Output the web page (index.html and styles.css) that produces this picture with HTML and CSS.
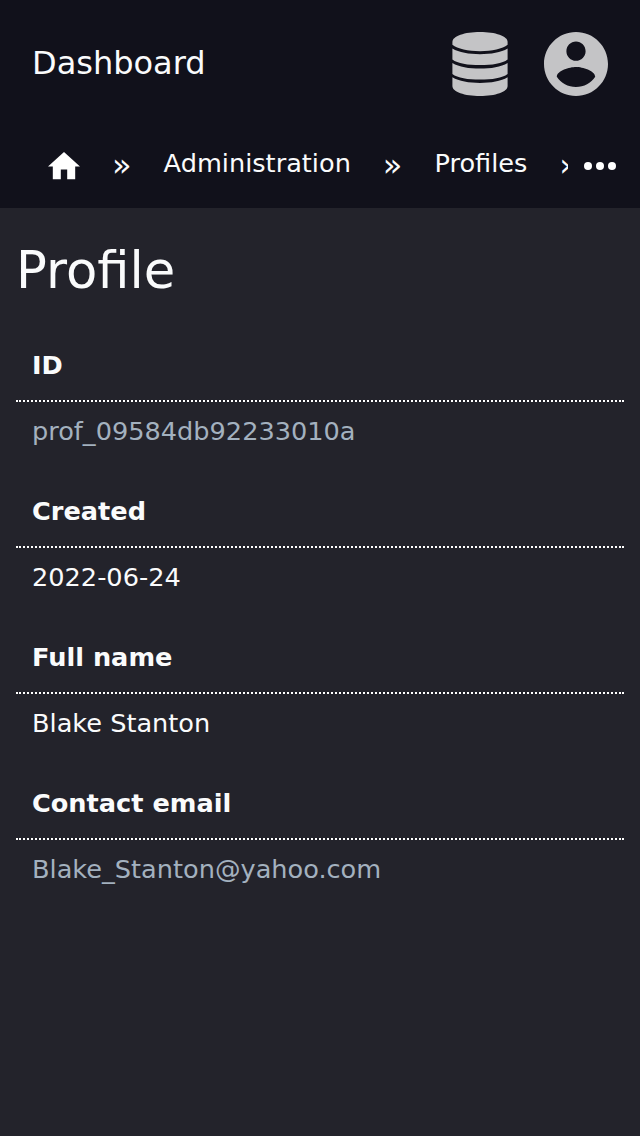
FILE: index.html
```html
<!DOCTYPE html>
<html lang="en">
<head>
<meta charset="utf-8">
<title>Profile</title>
<link rel="stylesheet" href="styles.css">
</head>
<body>
<header class="header">
  <div class="topbar">
    <span class="brand">Dashboard</span>
    <div class="actions">
      <svg class="icon-db" viewBox="0 0 56 64"><path d="M.4 10C.4 4 12.6 0 28 0s27.600 4 27.600 10v2.800C50.500 17 40 19.200 28 19.200S5.500 17 .4 12.800z"/><path d="M.4 16.600C7 20.600 17 22.300 28 22.300s21-1.700 27.600-5.700v10.900C50.500 31.500 40 33.100 28 33.100S5.500 31.500.4 27.500z"/><path d="M.4 31C7 35 17 36.600 28 36.600s21-1.600 27.600-5.600v11C50.500 46 40 47.600 28 47.600S5.500 46 .4 42z"/><path d="M.4 45.300C7 49.300 17 51 28 51s21-1.700 27.600-5.700V54C55.600 60 43.400 64 28 64S.4 60 .4 54z"/></svg>
      <svg class="icon-user" viewBox="2 2 20 20"><path d="M12 2C6.480 2 2 6.480 2 12s4.480 10 10 10 10-4.480 10-10S17.520 2 12 2zm0 3c1.660 0 3 1.340 3 3s-1.340 3-3 3-3-1.340-3-3 1.340-3 3-3zm0 14.200c-2.500 0-4.710-1.280-6-3.220.03-1.990 4-3.080 6-3.080 1.990 0 5.970 1.090 6 3.080-1.290 1.940-3.500 3.220-6 3.220z"/></svg>
    </div>
  </div>
  <nav class="crumbs">
    <div class="trail">
      <svg class="home" viewBox="2 3 20 17"><path d="M10 20v-6h4v6h5v-8h3L12 3 2 12h3v8z"/></svg>
      <span class="sep">»</span><span class="crumb">Administration</span><span class="sep">»</span><span class="crumb">Profiles</span><span class="sep">»</span>
    </div>
    <svg class="more" viewBox="0 0 32 8"><circle cx="4" cy="4" r="4"/><circle cx="16" cy="4" r="4"/><circle cx="28" cy="4" r="4"/></svg>
  </nav>
</header>
<main class="content">
  <h1 class="title">Profile</h1>
  <dl class="details">
    <dt class="label">ID</dt><dd class="value link">prof_09584db92233010a</dd>
    <dt class="label">Created</dt><dd class="value">2022-06-24</dd>
    <dt class="label">Full name</dt><dd class="value">Blake Stanton</dd>
    <dt class="label">Contact email</dt><dd class="value link">Blake_Stanton@yahoo.com</dd>
  </dl>
</main>
</body>
</html>
```
FILE: styles.css
```css
* { box-sizing: border-box; }
body { margin: 0; background: #23232b; color: #fafbfc; font: 25.6px/40px "DejaVu Sans", sans-serif; }
.header { height: 208px; background: #11111b; }
.topbar { height: 128px; padding: 0 32px; display: flex; align-items: center; justify-content: space-between; }
.brand { font-size: 32px; margin-bottom: 2px; }
.actions { display: flex; gap: 36px; fill: #c4c4c6; }
.icon-db { width: 56px; height: 64px; }
.icon-user { width: 64px; height: 64px; }
.crumbs { height: 80px; display: flex; padding: 0 24px 0 48px; justify-content: space-between; }
.trail { display: flex; width: 520px; overflow: hidden; white-space: nowrap; padding-top: 15px; }
.home { width: 32px; height: 27.2px; margin-top: 9.4px; fill: #fff; flex: none; }
.sep { margin: 2px 32px 0; font-size: 32px; }
.more { width: 32px; height: 8px; margin-top: 34px; fill: #fff; }
.content { padding: 30px 16px; }
.title { margin: 0; font-size: 51.2px; font-weight: 400; line-height: 64px; }
.details { margin: 27px 0 0; }
.label { height: 73px; padding: 16px 16px 0; font-weight: 700; border-bottom: 2px dotted #fff; }
.value { height: 73px; margin: 0; padding: 9px 16px 0; }
.link { color: #a3b1bf; }
```
